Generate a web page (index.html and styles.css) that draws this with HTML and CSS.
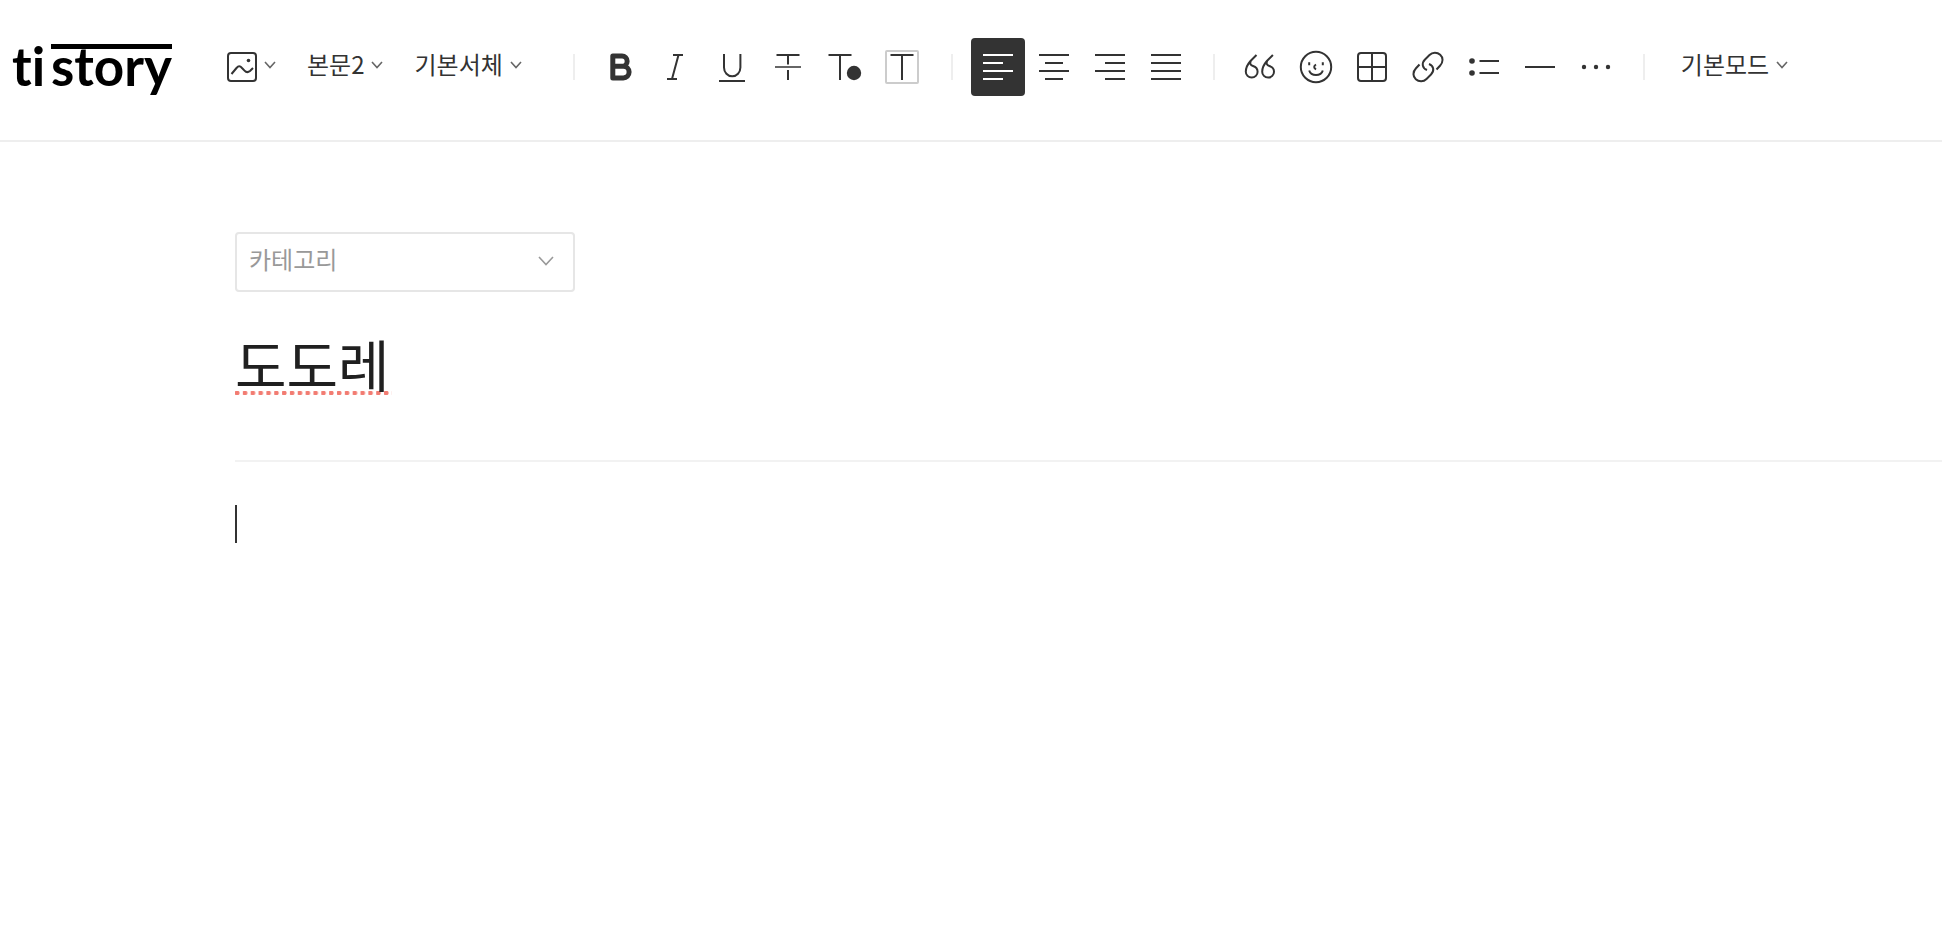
FILE: index.html
```html
<!DOCTYPE html>
<html lang="ko">
<head>
  <meta charset="UTF-8" />
  <meta name="viewport" content="width=device-width, initial-scale=1" />
  <title>글쓰기 - tistory</title>
  <link rel="stylesheet" href="styles.css">
</head>
<body>

<header>
  <a href="#" class="logo"><span>ti</span><span class="logo-bar">story</span></a>

  <div class="toolbar">
    <div class="menus">
      <button type="button" class="dropdown" aria-label="첨부">
        <svg class="icon" width="30" height="30" viewBox="0 0 30 30">
          <rect x="1" y="1" width="28" height="28" rx="3" />
          <path d="M4.5 22 L9.5 16 C11.5 13.6 13 13.6 15 16 L17.5 18.6 C19.5 20.8 21 20.6 23 19 L26 16" />
          <circle class="fill" cx="21.5" cy="8.5" r="1.8" />
        </svg>
        <svg class="arrow" width="12" height="8" viewBox="0 0 12 8"><path d="M1 1 L6 6.5 L11 1" /></svg>
      </button>
      <label class="dropdown">
        <select aria-label="문단 모양"><option>본문2</option></select>
        <svg class="arrow" width="12" height="8" viewBox="0 0 12 8"><path d="M1 1 L6 6.5 L11 1" /></svg>
      </label>
      <label class="dropdown">
        <select aria-label="글꼴"><option>기본서체</option></select>
        <svg class="arrow" width="12" height="8" viewBox="0 0 12 8"><path d="M1 1 L6 6.5 L11 1" /></svg>
      </label>
    </div>

    <!-- 글자 -->
    <div class="group">
      <button type="button" aria-label="굵게">
        <svg class="icon bold" viewBox="0 0 54 58"><path d="M19.8 18 H29 a5.1 5.1 0 0 1 0 10.3 H19.8 Z M19.8 28.3 H30.3 a5.8 5.8 0 0 1 0 11.6 H19.8 Z" /></svg>
      </button>
      <button type="button" aria-label="기울임">
        <svg class="icon" viewBox="0 0 54 58"><path d="M24 17 H34 M18 41 H28 M29.5 17 L23 41" /></svg>
      </button>
      <button type="button" aria-label="밑줄">
        <svg class="icon" viewBox="0 0 54 58"><path d="M19 16 V29.5 a8.2 8.8 0 0 0 16.4 0 V16 M14 43 H40" /></svg>
      </button>
      <button type="button" aria-label="취소선">
        <svg class="icon" viewBox="0 0 54 58"><path d="M15.5 17 H38.5 M27 17 V26.5 M27 32 V42" /><path class="thin" d="M14 29 H40" /></svg>
      </button>
      <button type="button" class="wide" aria-label="글자색">
        <svg class="icon" viewBox="0 0 54 58"><path d="M11.5 17 H34.5 M23 17 V42" /><circle class="fill" cx="37" cy="35" r="7.2" /></svg>
      </button>
      <button type="button" class="wide" aria-label="글자 배경색">
        <svg class="icon" viewBox="0 0 54 58"><rect class="box" x="11" y="13" width="32" height="32" rx="1" /><path d="M15.5 17 H38.5 M27 17 V42" /></svg>
      </button>
    </div>

    <!-- 정렬 -->
    <div class="group">
      <button type="button" class="active" aria-label="왼쪽 정렬" aria-pressed="true">
        <svg class="icon" viewBox="0 0 54 58"><path d="M12 17 H42 M12 25 H32 M12 33 H42 M12 41 H32" /></svg>
      </button>
      <button type="button" aria-label="가운데 정렬">
        <svg class="icon" viewBox="0 0 54 58"><path d="M12 17 H42 M18 25 H36 M12 33 H42 M18 41 H36" /></svg>
      </button>
      <button type="button" aria-label="오른쪽 정렬">
        <svg class="icon" viewBox="0 0 54 58"><path d="M12 17 H42 M22 25 H42 M12 33 H42 M22 41 H42" /></svg>
      </button>
      <button type="button" aria-label="양쪽 정렬">
        <svg class="icon" viewBox="0 0 54 58"><path d="M12 17 H42 M12 25 H42 M12 33 H42 M12 41 H42" /></svg>
      </button>
    </div>

    <!-- 삽입 -->
    <div class="group">
      <button type="button" aria-label="인용">
        <svg class="icon" viewBox="0 0 54 58">
          <path d="M23.5 17 L17.5 23 C14 27 12.8 30.5 12.8 33.7 a5.9 5.9 0 0 0 11.8 0 C24.6 30.5 22.5 28.8 20 28 C17.5 27.2 16.5 25.5 17.8 23" />
          <path d="M39.9 17 L33.9 23 C30.4 27 29.2 30.5 29.2 33.7 a5.9 5.9 0 0 0 11.8 0 C41 30.5 38.9 28.8 36.4 28 C33.9 27.2 32.9 25.5 34.2 23" />
        </svg>
      </button>
      <button type="button" aria-label="이모티콘">
        <svg class="icon" viewBox="0 0 54 58">
          <circle cx="27" cy="29" r="15.2" />
          <path d="M20.2 24.3 V27.3 M33.8 24.3 V27.3 M27 26.5 C24.6 28 24.6 30 27 31.5 M20.2 32.5 C22 38.5 32 38.5 33.8 32.5" />
        </svg>
      </button>
      <button type="button" aria-label="표">
        <svg class="icon" viewBox="0 0 54 58"><rect x="13" y="15" width="28" height="28" rx="3" /><path d="M27 15 V43 M13 29 H41" /></svg>
      </button>
      <button type="button" aria-label="링크">
        <svg class="icon" viewBox="0 0 54 58">
          <path d="M18.5 26.5 L15 30.3 C11.5 34 11.8 38.5 14.8 41.2 C17.8 44 22.5 44 25.5 41 L30 36.5 C33.5 33 33 28 28 26" />
          <path transform="rotate(180 27 29)" d="M18.5 26.5 L15 30.3 C11.5 34 11.8 38.5 14.8 41.2 C17.8 44 22.5 44 25.5 41 L30 36.5 C33.5 33 33 28 28 26" />
        </svg>
      </button>
      <button type="button" aria-label="목록">
        <svg class="icon" viewBox="0 0 54 58"><circle class="fill" cx="15" cy="23" r="2.8" /><circle class="fill" cx="15" cy="35" r="2.8" /><path d="M22.5 23 H42 M22.5 35 H42" /></svg>
      </button>
      <button type="button" aria-label="구분선">
        <svg class="icon" viewBox="0 0 54 58"><path d="M12 29 H42" /></svg>
      </button>
      <button type="button" aria-label="더보기">
        <svg class="icon" viewBox="0 0 54 58"><circle class="fill" cx="15" cy="29" r="2.2" /><circle class="fill" cx="27" cy="29" r="2.2" /><circle class="fill" cx="39" cy="29" r="2.2" /></svg>
      </button>
    </div>

    <div class="mode">
      <label class="dropdown">
        <select aria-label="모드"><option>기본모드</option></select>
        <svg class="arrow" width="12" height="8" viewBox="0 0 12 8"><path d="M1 1 L6 6.5 L11 1" /></svg>
      </label>
    </div>
  </div>
</header>

<main>
  <label class="category">
    <select aria-label="카테고리"><option>카테고리</option></select>
    <svg class="arrow" width="16" height="10" viewBox="0 0 16 10"><path d="M1 1 L8 8.5 L15 1" /></svg>
  </label>

  <div class="title">
    <input type="text" value="도도레" aria-label="제목" spellcheck="false" />
  </div>

  <div class="editor">
    <textarea aria-label="본문" spellcheck="false"></textarea>
    <span class="caret"></span>
  </div>
</main>

</body>
</html>
```
FILE: styles.css
```css
* {
  box-sizing: border-box;
}
body {
  margin: 0;
  font-family: "Noto Sans CJK KR", sans-serif;
  font-size: 24px;
  line-height: 36px;
  background: #fff;
  color: #333;
}
button, select, input, textarea {
  margin: 0;
  padding: 0;
  border: 0;
  background: none;
  color: inherit;
  font: inherit;
  outline: none;
}
button, select {
  cursor: pointer;
}
select {
  appearance: none;
  field-sizing: content;
}
svg {
  display: block;
  flex-shrink: 0;
}

/* Header */
header {
  display: flex;
  align-items: center;
  padding: 38px 12px 44px;
  border-bottom: 2px solid #eee;
}
.logo {
  display: flex;
  justify-content: space-between;
  width: 160px;
  padding-bottom: 2px;
  margin-right: 55px;
  flex-shrink: 0;
  font-family: Lato, sans-serif;
  font-size: 53px;
  font-weight: 700;
  font-variant-ligatures: none;
  line-height: 44px;
  color: #000;
  text-decoration: none;
}
.logo-bar {
  border-top: 5px solid #000;
  line-height: 34px;
}

/* Toolbar */
.toolbar {
  display: flex;
  align-items: center;
}
.menus {
  display: flex;
  align-items: center;
  gap: 31px;
  margin-right: 51px;
}
.dropdown {
  display: flex;
  align-items: center;
  gap: 7px;
  white-space: nowrap;
}
.dropdown select {
  margin-bottom: 6px;
}
.dropdown .arrow {
  margin-bottom: 4px;
}
.arrow {
  fill: none;
  stroke: #666;
  stroke-width: 1.6;
  pointer-events: none;
}
.group {
  display: flex;
  gap: 2px;
  margin-right: 20px;
}
.group::before,
.mode::before {
  content: "";
  width: 2px;
  height: 26px;
  margin-right: 16px;
  align-self: center;
  background: #eee;
}
.group button {
  width: 54px;
  height: 58px;
  border-radius: 4px;
}
.group button.wide {
  width: 56px;
}
.group .icon {
  width: 54px;
  height: 58px;
}
.group button.active {
  background: #333;
  color: #fff;
}
.mode {
  display: flex;
}
.mode::before {
  margin-right: 36px;
}

/* Icons */
.icon {
  fill: none;
  stroke: currentColor;
  stroke-width: 2;
}
.icon .fill {
  fill: currentColor;
  stroke: none;
}
.icon .thin {
  stroke: #666;
}
.icon .box {
  stroke: #ccc;
}
.icon.bold {
  stroke-width: 5;
  stroke-linejoin: round;
}

/* Content */
main {
  padding: 90px 0 40px 235px;
}
.category {
  display: flex;
  align-items: center;
  width: 340px;
  height: 60px;
  padding: 0 19px 0 12px;
  border: 2px solid #e6e6e6;
  border-radius: 4px;
  color: #999;
}
.category select {
  flex: 1;
  margin-bottom: 6px;
}
.category .arrow {
  margin-bottom: 2px;
  stroke: #999;
}
.title {
  margin-top: 38px;
  padding-bottom: 65px;
  border-bottom: 2px solid #f2f2f2;
}
.title input {
  display: block;
  field-sizing: content;
  height: 65px;
  padding-right: 2px;
  font-size: 56px;
  line-height: 65px;
  color: #202020;
  /* 맞춤법 표시 점선 */
  background: radial-gradient(circle at 2px 2px, #f27c72 2px, transparent 3px) left bottom / 8px 4px;
  background-repeat: round no-repeat;
}
.editor {
  position: relative;
  padding-top: 43px;
}
.editor textarea {
  display: block;
  width: 100%;
  height: 300px;
  resize: none;
}
.caret {
  position: absolute;
  top: 43px;
  left: 0;
  width: 2px;
  height: 38px;
  background: #333;
}
```
